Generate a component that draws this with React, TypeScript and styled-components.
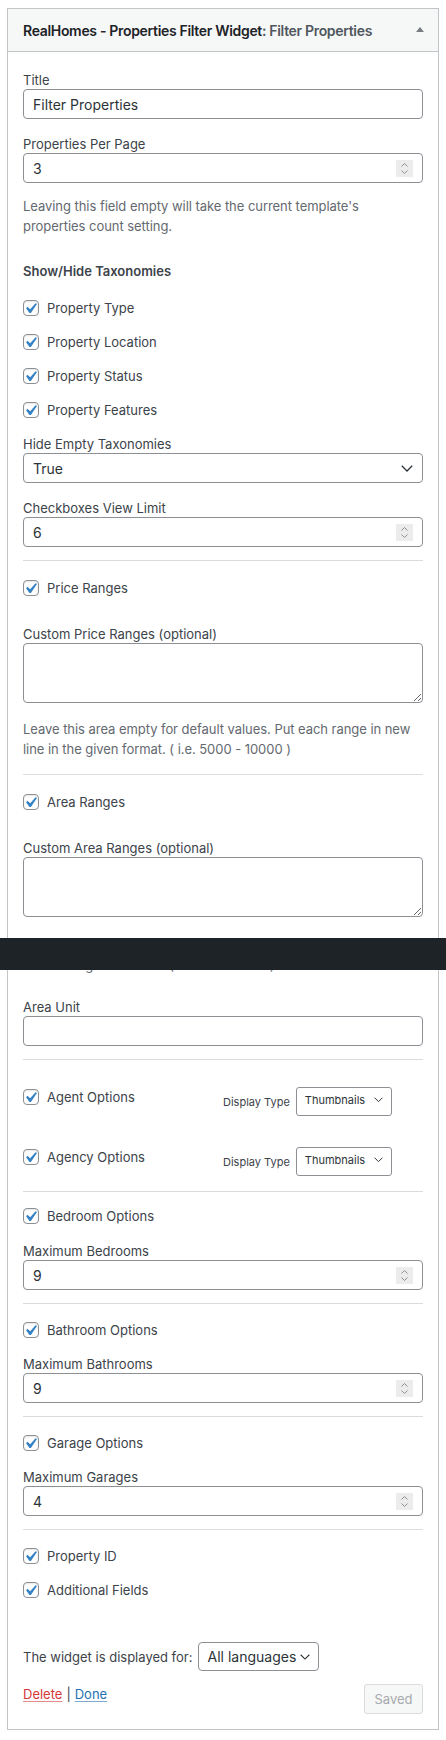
import React from "react";
import styled, { createGlobalStyle } from "styled-components";

const GlobalStyle = createGlobalStyle`
  html, body { margin: 0; padding: 0; background: #ffffff; }
  body {
    font-family: Inter, "Liberation Sans", Arial, sans-serif;
    color: #3c434a;
    -webkit-font-smoothing: antialiased;
  }
  * { box-sizing: border-box; }
`;

const Page = styled.div`
  position: relative;
  width: 446px;
  min-height: 1740px;
  padding: 8px 7px;
`;

const Widget = styled.div`
  border: 1px solid #c3c4c7;
  background: #ffffff;
`;

const Header = styled.div`
  height: 43px;
  background: #f6f7f7;
  border-bottom: 1px solid #c3c4c7;
  display: flex;
  align-items: center;
  justify-content: space-between;
  padding: 0 14px 0 15px;
`;

const HeaderTitle = styled.h3`
  margin: 0;
  font-size: 14px;
  font-weight: 600;
  color: #1d2327;
  letter-spacing: -0.32px;
`;

const HeaderSub = styled.span`
  color: #50575e;
`;

const Toggle = styled.span`
  width: 0;
  height: 0;
  border-left: 4px solid transparent;
  border-right: 4px solid transparent;
  border-bottom: 5px solid #787c82;
  margin-top: -2px;
`;

const Body = styled.div`
  display: flex;
  flex-direction: column;
  padding: 0 15px 15px;
`;

const Label = styled.label<{ $mt: number }>`
  display: block;
  margin-top: ${(p) => p.$mt}px;
  font-size: 13px;
  line-height: 18px;
  color: #3c434a;
`;

const SectionTitle = styled.div<{ $mt: number }>`
  margin-top: ${(p) => p.$mt}px;
  font-size: 13px;
  line-height: 18px;
  font-weight: 600;
  color: #3c434a;
`;

const Hint = styled.p<{ $mt: number }>`
  margin: ${(p) => p.$mt}px 0 0;
  font-size: 13px;
  line-height: 19.5px;
  color: #646970;
  letter-spacing: -0.05px;
`;

const Field = styled.div`
  height: 30px;
  border: 1px solid #8c8f94;
  border-radius: 4px;
  background: #ffffff;
  display: flex;
  align-items: center;
  justify-content: space-between;
  padding: 0 9px;
  font-size: 14px;
  color: #2c3338;
`;

const Spinner = styled.span`
  width: 17px;
  height: 17px;
  background: #ececec;
  display: flex;
  align-items: center;
  justify-content: center;
`;

const TextArea = styled.textarea`
  display: block;
  width: 100%;
  height: 60px;
  border: 1px solid #8c8f94;
  border-radius: 4px;
  font-family: inherit;
  font-size: 14px;
  padding: 6px 8px;
  margin: 0;
  background: #ffffff;
`;

const Divider = styled.hr<{ $mt: number }>`
  margin: ${(p) => p.$mt}px 0 0;
  border: 0;
  height: 1px;
  background: #dcdcde;
`;

const CheckRow = styled.label<{ $mt: number }>`
  display: flex;
  align-items: center;
  gap: 8px;
  height: 18px;
  margin-top: ${(p) => p.$mt}px;
  font-size: 13px;
  color: #3c434a;
`;

const Box = styled.span`
  width: 16px;
  height: 16px;
  flex: none;
  border: 1px solid #8c8f94;
  border-radius: 4px;
  background: #ffffff;
  box-shadow: inset 0 1px 2px rgba(0, 0, 0, 0.1);
  display: flex;
`;

const CheckSvg = styled.svg`
  width: 21px;
  height: 21px;
  flex: none;
  margin: -3px 0 0 -4px;
`;

const OptionRow = styled.div<{ $mt: number }>`
  display: grid;
  grid-template-columns: 1fr 1fr;
  align-items: center;
  margin-top: ${(p) => p.$mt}px;
`;

const OptionLeft = styled.div`
  align-self: start;
  padding-top: 1px;
`;

const DisplayType = styled.div`
  display: flex;
  align-items: center;
  gap: 6px;
  font-size: 11px;
  color: #3c434a;
`;

const SmallSelect = styled.div`
  width: 96px;
  height: 29px;
  border: 1px solid #8c8f94;
  border-radius: 3px;
  display: flex;
  align-items: center;
  justify-content: space-between;
  padding: 0 8px 3px 8px;
  font-size: 11px;
  color: #2c3338;
`;

const LangRow = styled.div<{ $mt: number }>`
  display: flex;
  align-items: center;
  gap: 5px;
  margin-top: ${(p) => p.$mt}px;
  font-size: 13px;
  color: #3c434a;
`;

const LangSelect = styled.div`
  width: 121px;
  height: 29px;
  border: 1px solid #8c8f94;
  border-radius: 4px;
  display: flex;
  align-items: center;
  justify-content: space-between;
  padding: 0 8px 0 9px;
  font-size: 14px;
  color: #2c3338;
`;

const Actions = styled.div<{ $mt: number }>`
  display: flex;
  align-items: center;
  justify-content: space-between;
  margin-top: ${(p) => p.$mt}px;
  height: 30px;
  font-size: 13px;
  color: #3c434a;
`;

const Links = styled.div`
  display: flex;
  align-items: center;
  gap: 4px;
  margin-top: -10px;
`;

const LinkA = styled.a<{ $danger?: boolean }>`
  color: ${(p) => (p.$danger ? "#d63638" : "#2271b1")};
  text-decoration: underline;
  text-decoration-color: ${(p) => (p.$danger ? "#e88a8b" : "#7fa9d4")};
  text-underline-offset: 2px;
  cursor: pointer;
`;

const SavedButton = styled.button`
  width: 59px;
  height: 30px;
  border: 1px solid #dcdcde;
  border-radius: 3px;
  background: #f6f7f7;
  color: #a7aaad;
  font-family: inherit;
  font-size: 13px;
  padding: 0;
`;

const AdminBar = styled.div`
  position: absolute;
  left: 0;
  right: 0;
  top: 938px;
  height: 32px;
  background: #1d2327;
`;

const Check: React.FC<{ label: string; mt: number }> = ({ label, mt }) => (
  <CheckRow $mt={mt}>
    <Box>
      <CheckSvg viewBox="0 0 20 20">
        <path
          d="M14.83 4.89l1.34.94-5.81 8.38H9.02L5.78 9.67l1.34-1.25 2.57 2.4z"
          fill="#3582c4"
        />
      </CheckSvg>
    </Box>
    {label}
  </CheckRow>
);

const SpinIcon = () => (
  <Spinner>
    <svg width="9" height="13" viewBox="0 0 9 13">
      <path d="M1.5 4.5L4.5 1.5L7.5 4.5" fill="none" stroke="#8c8f94" strokeWidth="1" />
      <path d="M1.5 8.5L4.5 11.5L7.5 8.5" fill="none" stroke="#8c8f94" strokeWidth="1" />
    </svg>
  </Spinner>
);

const Chevron: React.FC<{ w: number }> = ({ w }) => (
  <svg width={w} height={w / 2 + 1} viewBox="0 0 12 7">
    <path d="M0.8 0.8L6 6L11.2 0.8" fill="none" stroke="#2c3338" strokeWidth="1.3" />
  </svg>
);

const NumberField: React.FC<{ value: string }> = ({ value }) => (
  <Field>
    <span>{value}</span>
    <SpinIcon />
  </Field>
);

const ThumbSelect = () => (
  <DisplayType>
    Display Type
    <SmallSelect>
      <span>Thumbnails</span>
      <Chevron w={9} />
    </SmallSelect>
  </DisplayType>
);

export default function App() {
  return (
    <>
      <GlobalStyle />
      <Page>
        <Widget>
          <Header>
            <HeaderTitle>
              RealHomes - Properties Filter Widget<HeaderSub>: Filter Properties</HeaderSub>
            </HeaderTitle>
            <Toggle />
          </Header>
          <Body>
            <Label $mt={19}>Title</Label>
            <Field>Filter Properties</Field>

            <Label $mt={16}>Properties Per Page</Label>
            <NumberField value="3" />
            <Hint $mt={14}>
              Leaving this field empty will take the current template's properties count setting.
            </Hint>

            <SectionTitle $mt={26}>Show/Hide Taxonomies</SectionTitle>
            <Check label="Property Type" mt={19} />
            <Check label="Property Location" mt={16} />
            <Check label="Property Status" mt={16} />
            <Check label="Property Features" mt={16} />

            <Label $mt={16}>Hide Empty Taxonomies</Label>
            <Field>
              <span>True</span>
              <Chevron w={12} />
            </Field>

            <Label $mt={16}>Checkboxes View Limit</Label>
            <NumberField value="6" />

            <Divider $mt={13} />
            <Check label="Price Ranges" mt={18} />
            <Label $mt={28}>Custom Price Ranges (optional)</Label>
            <TextArea readOnly />
            <Hint $mt={17}>
              Leave this area empty for default values. Put each range in new line in the given
              format. ( i.e. 5000 - 10000 )
            </Hint>

            <Divider $mt={15} />
            <Check label="Area Ranges" mt={18} />
            <Label $mt={28}>Custom Area Ranges (optional)</Label>
            <TextArea readOnly />
            <Hint $mt={19}>
              Leave this area empty for default values. Put each range in new line in the given
              format. ( i.e. 500 - 1000 )
            </Hint>

            <Label $mt={23}>Area Unit</Label>
            <Field />

            <Divider $mt={13} />
            <OptionRow $mt={27}>
              <OptionLeft>
                <Check label="Agent Options" mt={0} />
              </OptionLeft>
              <ThumbSelect />
            </OptionRow>
            <OptionRow $mt={31}>
              <OptionLeft>
                <Check label="Agency Options" mt={0} />
              </OptionLeft>
              <ThumbSelect />
            </OptionRow>

            <Divider $mt={15} />
            <Check label="Bedroom Options" mt={15} />
            <Label $mt={17}>Maximum Bedrooms</Label>
            <NumberField value="9" />

            <Divider $mt={13} />
            <Check label="Bathroom Options" mt={17} />
            <Label $mt={16}>Maximum Bathrooms</Label>
            <NumberField value="9" />

            <Divider $mt={13} />
            <Check label="Garage Options" mt={17} />
            <Label $mt={16}>Maximum Garages</Label>
            <NumberField value="4" />

            <Divider $mt={13} />
            <Check label="Property ID" mt={17} />
            <Check label="Additional Fields" mt={16} />

            <LangRow $mt={43}>
              The widget is displayed for:
              <LangSelect>
                <span>All languages</span>
                <Chevron w={10} />
              </LangSelect>
            </LangRow>

            <Actions $mt={13}>
              <Links>
                <LinkA $danger>Delete</LinkA>
                <span>|</span>
                <LinkA>Done</LinkA>
              </Links>
              <SavedButton disabled>Saved</SavedButton>
            </Actions>
          </Body>
        </Widget>
        <AdminBar />
      </Page>
    </>
  );
}
